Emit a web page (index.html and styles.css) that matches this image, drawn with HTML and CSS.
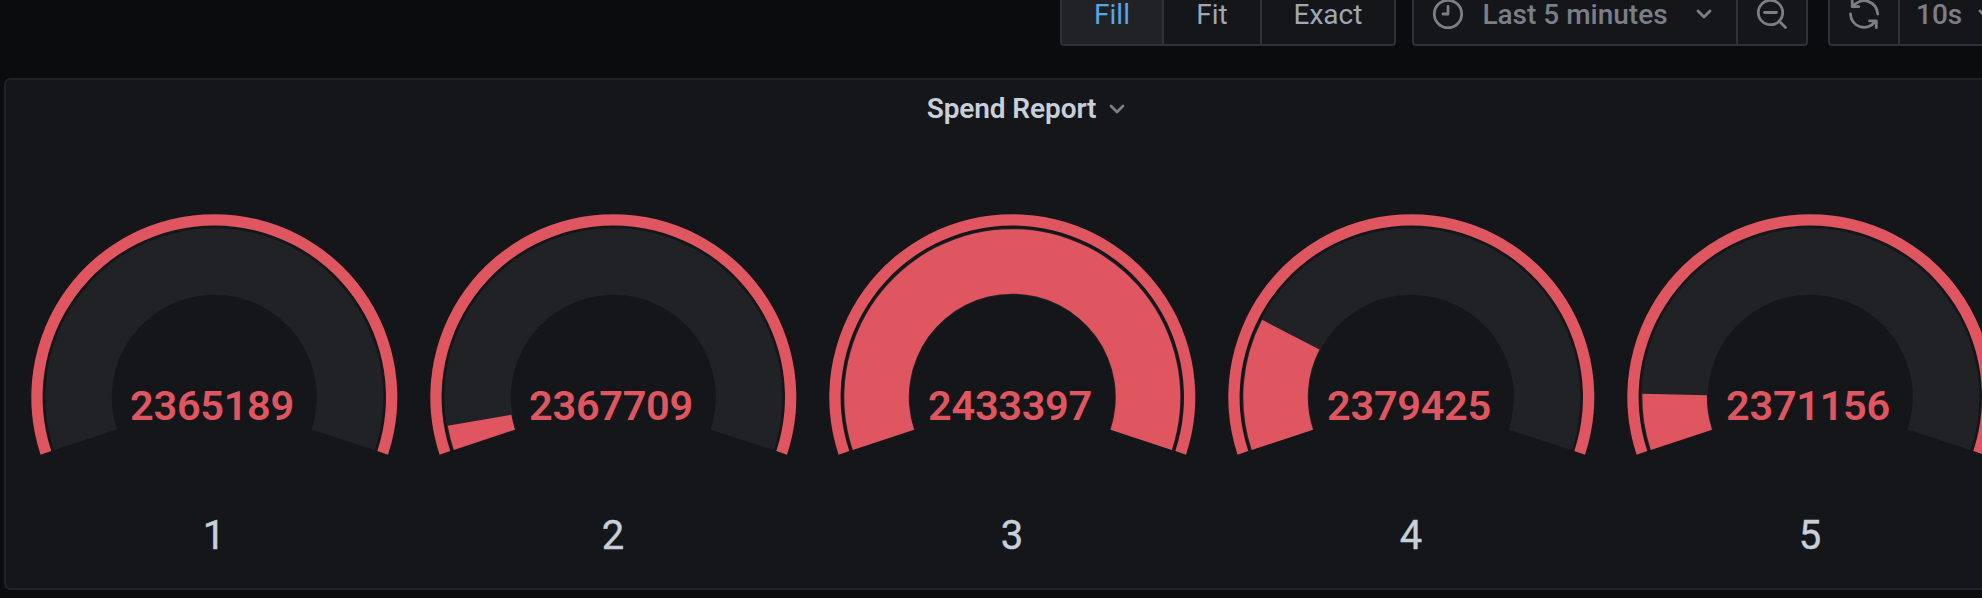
FILE: index.html
```html
<!DOCTYPE html>
<html lang="en">
<head>
<meta charset="utf-8">
<title>Spend Report</title>
<link rel="stylesheet" href="styles.css">
</head>
<body>
<header class="toolbar">
  <div class="group group-size">
    <button class="btn btn-fill active"><span class="text">Fill</span></button>
    <button class="btn btn-fit"><span class="text">Fit</span></button>
    <button class="btn btn-exact"><span class="text">Exact</span></button>
  </div>
  <div class="group group-time">
    <button class="btn btn-range">
      <svg class="icon" width="32" height="32" viewBox="0 0 32 32"><circle cx="16" cy="16" r="13.700"/><path d="M16 8.500V16H11"/></svg>
      <span class="text range-label">Last 5 minutes</span>
      <svg class="chevron" width="16" height="10" viewBox="0 0 16 10"><path d="M2 2l6 6 6-6"/></svg>
    </button>
    <button class="btn btn-zoom">
      <svg class="icon" width="32" height="32" viewBox="0 0 32 32"><circle cx="14.500" cy="14.500" r="12.200"/><path d="M8.500 14.500h12M23.500 23.500l6 6"/></svg>
    </button>
  </div>
  <div class="group group-refresh">
    <button class="btn btn-refresh">
      <svg class="icon" width="32" height="32" viewBox="0 0 32 32"><path d="M4.200 2V8.700H10.700M5 8.700A13.500 13.500 0 0 1 29.700 16M28.300 29.700V22.900H21.500M27.300 23.200A13.500 13.500 0 0 1 2.500 16"/></svg>
    </button>
    <button class="btn btn-interval">
      <span class="text">10s</span>
      <svg class="chevron" width="16" height="10" viewBox="0 0 16 10"><path d="M2 2l6 6 6-6"/></svg>
    </button>
  </div>
</header>
<main class="panel">
  <h2 class="panel-title">
    <span>Spend Report</span>
    <svg class="chevron" width="16" height="10" viewBox="0 0 16 10"><path d="M2 2l6 6 6-6"/></svg>
  </h2>
  <div class="gauges" id="gauges"></div>
</main>
<script src="gauges.js"></script>
</body>
</html>
```
FILE: styles.css
```css
* { box-sizing: border-box; }

body {
  margin: 0;
  width: 1982px;
  height: 598px;
  overflow: hidden;
  background: #0b0c0e;
  color: #c7d0d9;
  font-family: Roboto, "Liberation Sans", sans-serif;
}

.toolbar {
  display: flex;
  height: 78px;
  padding-left: 1060px;
  align-items: flex-start;
}

.group {
  display: flex;
  flex: none;
  height: 64px;
  margin-top: -18px;
  border: 2px solid #2c3235;
  border-radius: 4px;
  background: #141619;
  overflow: hidden;
}

.group-size { width: 336px; margin-right: 16px; }
.group-time { width: 396px; margin-right: 20px; }
.group-refresh { width: 180px; }

.btn {
  display: flex;
  flex: none;
  align-items: center;
  justify-content: center;
  height: 60px;
  padding: 0;
  border: 0;
  border-right: 2px solid #2c3235;
  background: transparent;
  color: #9fa7b3;
  font: 400 28px/34px Roboto, "Liberation Sans", sans-serif;
}

.text { padding-top: 2px; }
.btn:last-child { border-right: 0; }
.btn-fill { width: 102px; }
.btn-fit { width: 98px; }
.btn-exact { width: 132px; }
.btn.active { background: #202226; color: #5aa5e6; }

.btn-range, .btn-zoom, .btn-refresh, .btn-interval {
  color: #7b7e86;
  font-weight: 500;
}

.btn-range { width: 324px; justify-content: flex-start; padding-left: 18px; }
.range-label { width: 186px; margin: 0 28px 0 18px; white-space: nowrap; }
.btn-zoom { width: 68px; }
.btn-refresh { width: 70px; }
.btn-interval { width: 106px; gap: 16px; justify-content: flex-start; padding-left: 16px; }

.icon, .chevron {
  flex: none;
  fill: none;
  stroke: #7b7e86;
  stroke-width: 2.800;
  stroke-linecap: round;
  stroke-linejoin: round;
}

.panel {
  width: 2042px;
  height: 512px;
  margin-left: 4px;
  border: 2px solid #202226;
  border-radius: 6px;
  background: #141619;
}

.panel-title {
  display: flex;
  align-items: center;
  justify-content: center;
  gap: 13px;
  height: 56px;
  margin: 0;
  padding: 2px 0 0 2px;
  font-size: 28px;
  font-weight: 600;
  letter-spacing: -0.100px;
  line-height: 34px;
}

.gauges {
  display: flex;
  padding-left: 8px;
}

.gauge {
  display: flex;
  flex: none;
  flex-direction: column;
  width: 399px;
}

.dial { display: block; }
.ring, .value-arc { fill: #e05660; }
.track { fill: #202226; }

.value {
  fill: #e05660;
  font-size: 41.500px;
  font-weight: 600;
  letter-spacing: -0.300px;
  text-anchor: middle;
}

.label {
  height: 48px;
  margin-top: 41px;
  padding-left: 1px;
  font-size: 40px;
  line-height: 48px;
  text-align: center;
  -webkit-text-stroke: 0.400px #c7d0d9;
}
```
FILE: gauges.js
```js
const series = [
  { label: "1", value: 2365189 },
  { label: "2", value: 2367709 },
  { label: "3", value: 2433397 },
  { label: "4", value: 2379425 },
  { label: "5", value: 2371156 }
];
const MIN = 2365189, MAX = 2433397;
const START = 161.700, END = 378.300;
const CX = 200.300, CY = 261.200;

function point(r, deg) {
  const a = deg * Math.PI / 180;
  return (CX + r * Math.cos(a)).toFixed(2) + " " + (CY + r * Math.sin(a)).toFixed(2);
}

// Annular sector, angles in degrees clockwise from the positive x axis
function sector(inner, outer, from, to) {
  const large = to - from > 180 ? 1 : 0;
  return `M${point(outer, from)}A${outer} ${outer} 0 ${large} 1 ${point(outer, to)}` +
    `L${point(inner, to)}A${inner} ${inner} 0 ${large} 0 ${point(inner, from)}Z`;
}

document.getElementById("gauges").innerHTML = series.map(s => {
  const share = (s.value - MIN) / (MAX - MIN);
  const end = Math.min(END, START + (END - START) * share + 0.5);
  const arc = share > 0 ? `<path class="value-arc" d="${sector(103.5, 168, START, end)}"/>` : "";
  return `<div class="gauge">
    <svg class="dial" width="399" height="335" viewBox="0 0 399 335">
      <path class="ring" d="${sector(171.700, 183, START, END)}"/>
      <path class="track" d="${sector(102.500, 169, START, END)}"/>
      ${arc}
      <text class="value" x="198" y="284">${s.value}</text>
    </svg>
    <div class="label">${s.label}</div>
  </div>`;
}).join("");
```
